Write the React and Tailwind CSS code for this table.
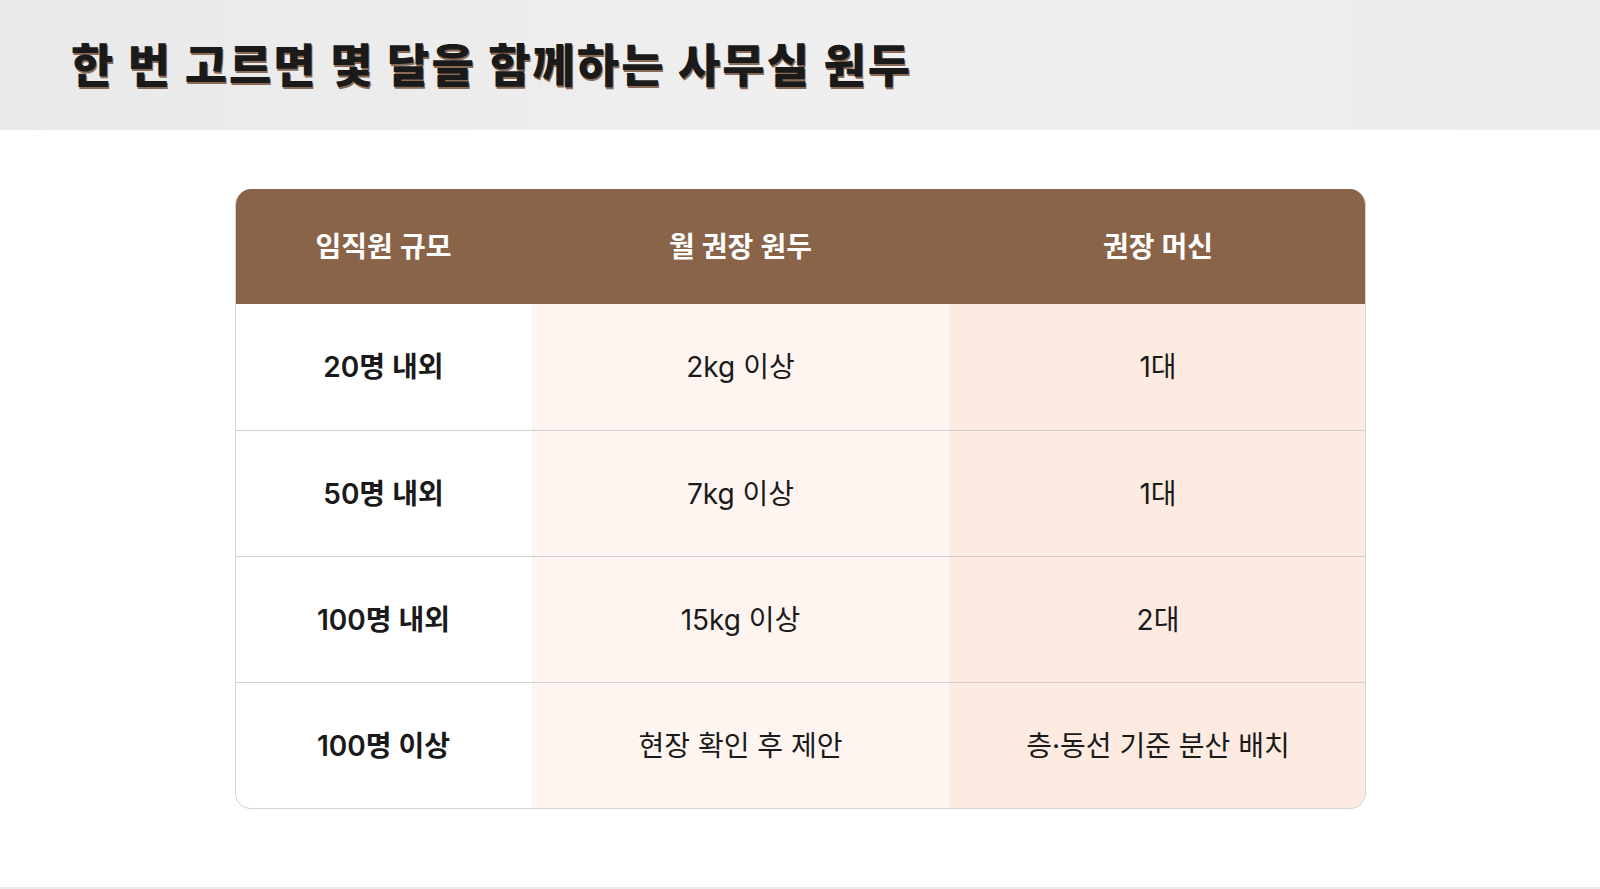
import React from "react";

const rows = [
  ["20명 내외", "2kg 이상", "1대"],
  ["50명 내외", "7kg 이상", "1대"],
  ["100명 내외", "15kg 이상", "2대"],
  ["100명 이상", "현장 확인 후 제안", "층·동선 기준 분산 배치"],
];

export default function App() {
  return (
    <div
      className="w-[1600px] h-[889px] bg-white flex flex-col overflow-hidden"
      style={{ fontFamily: "Inter, 'Noto Sans CJK KR', sans-serif" }}
    >
      <div className="h-[130px] shrink-0 bg-gradient-to-r from-[#e9e9e9] via-[#efefef] to-[#ececec] flex items-center pl-[71px]">
        <h1
          className="text-[46px] font-black text-[#1a1a1a] tracking-[2px] leading-none mt-[-7px]"
          style={{ fontFamily: "'Noto Sans CJK KR', sans-serif", textShadow: "1px 2px 0 #8a6a55" }}
        >
          한 번 고르면 몇 달을 함께하는 사무실 원두
        </h1>
      </div>
      <div className="flex-1 flex flex-col items-center pt-[59px]">
        <div className="w-[1131px] rounded-[16px] overflow-hidden border border-[#d4d4d4] border-t-0">
          <div className="grid grid-cols-[296px_418px_417px] h-[115px] bg-[#8a6449] text-white text-[28px] font-semibold">
            <div className="flex items-center justify-center">임직원 규모</div>
            <div className="flex items-center justify-center">월 권장 원두</div>
            <div className="flex items-center justify-center">권장 머신</div>
          </div>
          {rows.map((r, i) => (
            <div
              key={i}
              className={`grid grid-cols-[296px_418px_417px] h-[126px] text-[28px] text-[#1a1a1a] ${i > 0 ? "border-t border-[#cfcfcf]" : ""}`}
            >
              <div className="flex items-center justify-center bg-white font-semibold">{r[0]}</div>
              <div className="flex items-center justify-center bg-[#fef5f0]">{r[1]}</div>
              <div className="flex items-center justify-center bg-[#fdebe1]">{r[2]}</div>
            </div>
          ))}
        </div>
      </div>
      <div className="h-[2px] bg-[#ececec]" />
    </div>
  );
}
